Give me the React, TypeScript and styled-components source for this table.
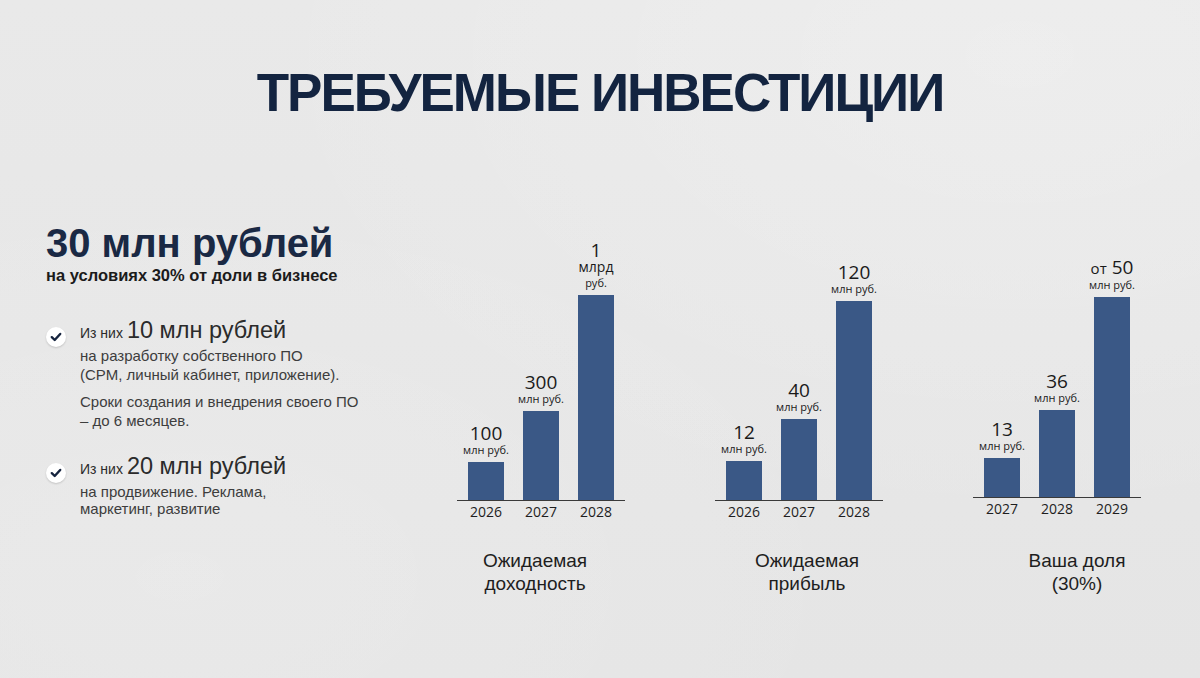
import React from "react";
import styled, {createGlobalStyle} from "styled-components";

type Bar = {
  year: string;
  height: number;
  value: React.ReactNode;
  unit: React.ReactNode;
};

type Chart = {
  caption: string[];
  shift: number;
  lift: number;
  bars: Bar[];
};

const getCharts = (): Chart[] => [
  {
    caption: ["Ожидаемая", "доходность"],
    shift: -6,
    lift: 0,
    bars: [
      {year: "2026", height: 38, value: "100", unit: "млн руб."},
      {year: "2027", height: 89, value: "300", unit: "млн руб."},
      {year: "2028", height: 205, value: "1", unit: <><Big>млрд</Big><br/>руб.</>},
    ],
  },
  {
    caption: ["Ожидаемая", "прибыль"],
    shift: 8,
    lift: 0,
    bars: [
      {year: "2026", height: 39, value: "12", unit: "млн руб."},
      {year: "2027", height: 81, value: "40", unit: "млн руб."},
      {year: "2028", height: 199, value: "120", unit: "млн руб."},
    ],
  },
  {
    caption: ["Ваша доля", "(30%)"],
    shift: 20,
    lift: 3,
    bars: [
      {year: "2027", height: 39, value: "13", unit: "млн руб."},
      {year: "2028", height: 87, value: "36", unit: "млн руб."},
      {year: "2029", height: 200, value: <><Small>от</Small> 50</>, unit: "млн руб."},
    ],
  },
];

const CheckIcon = () => (
  <CheckCircle>
    <svg width="12" height="12" viewBox="0 0 12 12" fill="none">
      <path d="M1.8 6.2 L4.7 9 L10.2 3" stroke="#16243f" strokeWidth="2.4" strokeLinecap="round" strokeLinejoin="round"/>
    </svg>
  </CheckCircle>
);

const App = () => {
  const charts = getCharts();
  return (
    <>
      <GlobalStyle/>
      <Page>
        <Title>ТРЕБУЕМЫЕ ИНВЕСТИЦИИ</Title>
        <Main>
          <Info>
            <Amount>30 млн рублей</Amount>
            <Terms>на условиях 30% от доли в бизнесе</Terms>
            <Items>
              <Item>
                <CheckIcon/>
                <div>
                  <ItemHead><small>Из них</small>10 млн рублей</ItemHead>
                  <ItemText>на разработку собственного ПО<br/>(СРМ, личный кабинет, приложение).</ItemText>
                  <ItemText $spaced>Сроки создания и внедрения своего ПО<br/>– до 6 месяцев.</ItemText>
                </div>
              </Item>
              <Item>
                <CheckIcon/>
                <div>
                  <ItemHead><small>Из них</small>20 млн рублей</ItemHead>
                  <ItemText $tight>на продвижение. Реклама,<br/>маркетинг, развитие</ItemText>
                </div>
              </Item>
            </Items>
          </Info>
          <Charts>
            {charts.map((chart, i) => (
              <ChartBlock key={i} $lift={chart.lift}>
                <Plot>
                  {chart.bars.map(bar => (
                    <Slot key={bar.year}>
                      <Value>{bar.value}</Value>
                      <Unit>{bar.unit}</Unit>
                      <BarRect style={{height: bar.height}}/>
                    </Slot>
                  ))}
                </Plot>
                <Years>
                  {chart.bars.map(bar => <Year key={bar.year}>{bar.year}</Year>)}
                </Years>
                <Caption $shift={chart.shift} $lift={chart.lift}>
                  {chart.caption.map(line => <div key={line}>{line}</div>)}
                </Caption>
              </ChartBlock>
            ))}
          </Charts>
        </Main>
      </Page>
    </>
  );
};

const GlobalStyle = createGlobalStyle`
  html, body {
    margin: 0;
    padding: 0;
  }
  body {
    font-family: "Liberation Sans", Arial, sans-serif;
    background: #e7e7e7;
  }
`

const Page = styled.div`
  width: 1200px;
  height: 678px;
  box-sizing: border-box;
  padding-top: 62px;
  overflow: hidden;
  background:
    radial-gradient(ellipse at 85% 8%, rgba(255, 255, 255, 0.22), transparent 55%),
    radial-gradient(ellipse at 15% 85%, rgba(255, 255, 255, 0.15), transparent 50%),
    linear-gradient(180deg, #e9e9e9 0%, #e5e5e5 100%);
`

const Title = styled.h1`
  margin: 0;
  text-align: center;
  font-family: "Liberation Sans", Arial, sans-serif;
  font-weight: 700;
  font-size: 53px;
  line-height: 62px;
  letter-spacing: -2px;
  color: #132440;
`

const Main = styled.div`
  display: flex;
  margin-top: 96px;
  padding-left: 46px;
`

const Info = styled.div`
  width: 411px;
  flex-shrink: 0;
`

const Amount = styled.div`
  font-weight: 700;
  font-size: 40px;
  line-height: 46px;
  color: #1a2944;
`

const Terms = styled.div`
  font-weight: 700;
  font-size: 16.5px;
  line-height: 18px;
  color: #1b1b1b;
`

const Items = styled.div`
  margin-top: 34px;
  display: flex;
  flex-direction: column;
  gap: 24px;
`

const Item = styled.div`
  display: flex;
  align-items: flex-start;
  gap: 14px;
`

const CheckCircle = styled.div`
  width: 20px;
  height: 20px;
  margin-top: 9px;
  border-radius: 50%;
  background: #ffffff;
  box-shadow: 0 1px 2px rgba(0, 0, 0, 0.16);
  display: flex;
  align-items: center;
  justify-content: center;
  flex-shrink: 0;
`

const ItemHead = styled.div`
  font-size: 23.5px;
  line-height: 25px;
  color: #2b2b2b;

  small {
    font-size: 14px;
    margin-right: 4px;
  }
`

const ItemText = styled.div<{ $spaced?: boolean; $tight?: boolean }>`
  font-size: 15px;
  line-height: ${({$tight}) => ($tight ? "17px" : "19px")};
  color: #3d3d3d;
  margin-top: ${({$spaced, $tight}) => ($spaced ? "8px" : $tight ? "1px" : "0")};
`

const Charts = styled.div`
  display: flex;
  gap: 90px;
`

const ChartBlock = styled.div<{ $lift: number }>`
  width: 168px;
  display: flex;
  flex-direction: column;
  margin-top: ${({$lift}) => -$lift}px;
`

const Plot = styled.div`
  height: 280px;
  display: flex;
  align-items: flex-end;
  padding: 0 1.5px;
  border-bottom: 1.5px solid #3a3a3a;
`

const Slot = styled.div`
  width: 55px;
  display: flex;
  flex-direction: column;
  align-items: center;
  font-family: "Open Sans", sans-serif;
  color: #1a1a1a;
  text-align: center;
`

const Value = styled.div`
  font-size: 19px;
  line-height: 20px;
`

const Small = styled.span`
  font-size: 15px;
`

const Big = styled.span`
  display: inline-block;
  font-size: 14px;
  line-height: 14px;
  margin-bottom: 2px;
`

const Unit = styled.div`
  font-size: 11px;
  line-height: 13px;
  margin-bottom: 6px;
`

const BarRect = styled.div`
  width: 36px;
  background: #3a5886;
`

const Years = styled.div`
  display: flex;
  padding: 2px 1.5px 0;
`

const Year = styled.div`
  width: 55px;
  text-align: center;
  font-family: "Open Sans", sans-serif;
  font-size: 14px;
  line-height: 18px;
  color: #1e1e1e;
`

const Caption = styled.div<{ $shift: number; $lift: number }>`
  margin-top: ${({$lift}) => 28 + $lift}px;
  margin-left: ${({$shift}) => $shift * 2}px;
  text-align: center;
  font-size: 19px;
  line-height: 23px;
  color: #1e1e1e;
`

export default App;
